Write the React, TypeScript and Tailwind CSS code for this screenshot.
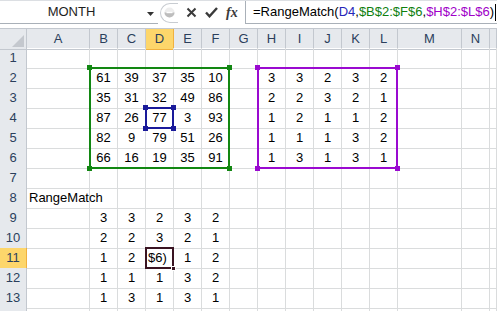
const COLS = ["A", "B", "C", "D", "E", "F", "G", "H", "I", "J", "K", "L", "M", "N", ""];

const rows: string[][] = [
  [],
  ["", "61", "39", "37", "35", "10", "", "3", "3", "2", "3", "2"],
  ["", "35", "31", "32", "49", "86", "", "2", "2", "3", "2", "1"],
  ["", "87", "26", "77", "3", "93", "", "1", "2", "1", "1", "2"],
  ["", "82", "9", "79", "51", "26", "", "1", "1", "1", "3", "2"],
  ["", "66", "16", "19", "35", "91", "", "1", "3", "1", "3", "1"],
  [],
  ["RangeMatch"],
  ["", "3", "3", "2", "3", "2"],
  ["", "2", "2", "3", "2", "1"],
  ["", "1", "2", "$6)", "1", "2"],
  ["", "1", "1", "1", "3", "2"],
  ["", "1", "3", "1", "3", "1"],
  [],
];

const gridCols = "grid grid-cols-[27px_63px_repeat(11,28px)_64px_28px_1fr]";

function Handle({ className }: { className: string }) {
  return <div className={`absolute w-[5px] h-[5px] ${className}`} />;
}

function RangeBox({ pos, color, handle }: { pos: string; color: string; handle: string }) {
  return (
    <div className={`absolute border-2 ${pos} ${color}`}>
      <Handle className={`-left-[4px] -top-[4px] ${handle}`} />
      <Handle className={`-right-[4px] -top-[4px] ${handle}`} />
      <Handle className={`-left-[4px] -bottom-[4px] ${handle}`} />
      <Handle className={`-right-[4px] -bottom-[4px] ${handle}`} />
    </div>
  );
}

function FormulaBar() {
  return (
    <div className="flex h-[28px] border-t border-[#dcdfe3] bg-white">
      <div className="w-[158px] h-[23px] border-b border-[#a9b0b8] flex items-center relative">
        <span className="w-[143px] text-center text-[13px] text-[#1e1e1e]">MONTH</span>
        <svg className="absolute left-[147px] top-[11px]" width="8" height="5" viewBox="0 0 8 5">
          <path d="M0 0h7L3.5 4z" fill="#333" />
        </svg>
      </div>
      <div className="w-[87px] h-[23px] flex items-center gap-[8px] pl-[2px]">
        <div className="w-[18px] h-[20px] rounded-l-full border border-[#c8ccd1] border-r-0 flex items-center justify-center">
          <svg width="11" height="11" viewBox="0 0 11 11">
            <circle cx="5.5" cy="5.5" r="5" fill="#ededed" />
            <path d="M0.5 5.5a5 5 0 0 0 10 0z" fill="#bdbdbd" />
            <rect x="2.5" y="4.8" width="6" height="1.4" fill="#fff" />
          </svg>
        </div>
        <svg width="11" height="11" viewBox="0 0 11 11">
          <path d="M1.5 1.5l8 8M9.5 1.5l-8 8" stroke="#3a3a3a" strokeWidth="2" />
        </svg>
        <svg width="13" height="11" viewBox="0 0 13 11">
          <path d="M1 5.5l3.5 3.8L12 1" stroke="#3a3a3a" strokeWidth="2.4" fill="none" />
        </svg>
        <span className="font-['Liberation_Serif',serif] italic font-bold text-[14px] text-[#3a3a3a] leading-none">
          fx
        </span>
      </div>
      <div className="flex-1 h-[23px] border-l border-b border-[#a9b0b8] flex items-center pl-[7px] text-[13px] whitespace-nowrap">
        <span className="text-black">=RangeMatch(</span>
        <span className="text-[#2626b8]">D4</span>
        <span className="text-black">,</span>
        <span className="text-[#0f7f0f]">$B$2:$F$6</span>
        <span className="text-black">,</span>
        <span className="text-[#a000c8]">$H$2:$L$6</span>
        <span className="text-black">)</span>
        <span className="w-px h-[17px] bg-black ml-[1px]" />
      </div>
    </div>
  );
}

export default function App() {
  return (
    <div className="w-[497px] h-[311px] overflow-hidden bg-white font-['Liberation_Sans',sans-serif]">
      <FormulaBar />
      <div className="relative">
        <div className={`${gridCols} h-[20px] bg-[#e6e9ed] text-[13px] text-[#2b3f5c] border-t border-[#c3c8cf]`}>
          <div className="border-r border-b border-[#c3c8cf] relative">
            <svg className="absolute right-[2px] bottom-[2px]" width="12" height="12" viewBox="0 0 12 12">
              <path d="M12 0V12H0z" fill="#c4c8ce" />
            </svg>
          </div>
          {COLS.map((c, i) => (
            <div
              key={i}
              className={`flex items-center justify-center border-r border-b ${
                c === "D" ? "bg-[#fdd66b] border-[#f0b13f]" : "border-[#c3c8cf]"
              }`}
            >
              {c}
            </div>
          ))}
        </div>
        {rows.map((r, ri) => {
          const n = ri + 1;
          return (
            <div key={ri} className={`${gridCols} h-[20px] text-[13px]`}>
              <div
                className={`flex items-center justify-center border-r border-b text-[#2b3f5c] ${
                  n === 11 ? "bg-[#fdd66b] border-[#f0b13f]" : "bg-[#e6e9ed] border-[#c3c8cf]"
                }`}
              >
                {n < 14 ? n : ""}
              </div>
              {COLS.map((_, ci) => {
                const v = r[ci] ?? "";
                return (
                  <div
                    key={ci}
                    className={`flex items-center border-r border-b border-[#dadcdd] text-black whitespace-nowrap ${
                      ci === 0 ? "justify-start pl-[2px] overflow-visible" : "justify-center"
                    } ${n === 11 && ci === 3 ? "justify-start pl-[2px]" : ""}`}
                  >
                    {v}
                  </div>
                );
              })}
            </div>
          );
        })}
        <RangeBox pos="left-[89px] top-[39px] w-[141px] h-[102px]" color="border-[#128712]" handle="bg-[#128712]" />
        <RangeBox pos="left-[257px] top-[39px] w-[141px] h-[102px]" color="border-[#9a0ad0]" handle="bg-[#9a0ad0]" />
        <RangeBox pos="left-[145px] top-[79px] w-[29px] h-[22px]" color="border-[#1a1a9a]" handle="bg-[#1a1a9a]" />
        <div className="absolute left-[145px] top-[219px] w-[29px] h-[22px] border-2 border-[#3a1422]">
          <div className="absolute -right-[4px] -bottom-[4px] w-[5px] h-[5px] bg-[#3a1422] border border-white" />
        </div>
      </div>
    </div>
  );
}
